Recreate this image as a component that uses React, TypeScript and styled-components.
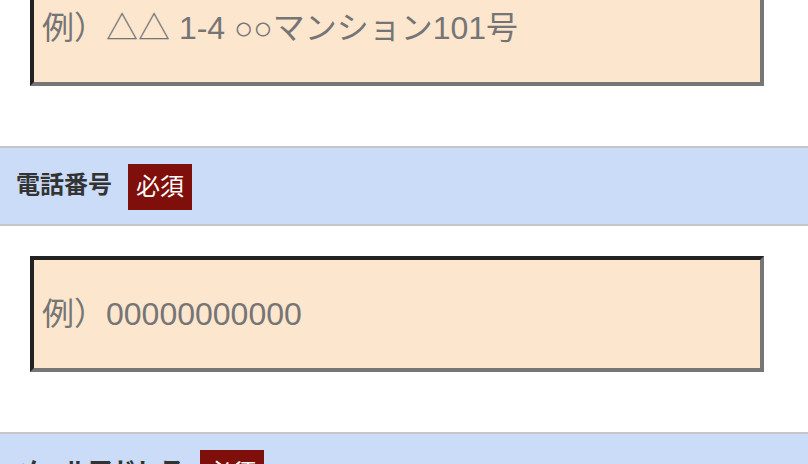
import styled, { createGlobalStyle } from "styled-components";

const GlobalStyle = createGlobalStyle`
  html, body {
    margin: 0;
    padding: 0;
    background: #fff;
    overflow: hidden;
  }
  body {
    font-family: "Liberation Sans", "Noto Sans CJK JP", sans-serif;
  }
  * {
    box-sizing: border-box;
  }
`;

interface FieldProps {
  label: string;
  placeholder: string;
  type?: string;
}

const fields: FieldProps[] = [
  { label: "電話番号", placeholder: "例）00000000000", type: "tel" },
  { label: "メールアドレス", placeholder: "例）example@example.com", type: "email" },
];

export default function App() {
  return (
    <>
      <GlobalStyle />
      <Page>
        {/* 前の項目（住所）の入力欄 */}
        <InputArea>
          <Input type="text" placeholder="例）△△ 1-4 ○○マンション101号" />
        </InputArea>
        {fields.map((field) => (
          <section key={field.label}>
            <Header>
              <Label>{field.label}</Label>
              <Required>必須</Required>
            </Header>
            <InputArea>
              <Input type={field.type} placeholder={field.placeholder} />
            </InputArea>
          </section>
        ))}
      </Page>
    </>
  );
}

/**
 * スタイル
 */
const Page = styled.div`
  margin-top: -60px;
  width: 808px;
`;

const InputArea = styled.div`
  padding: 30px 44px 60px 30px;
`;

const Input = styled.input`
  display: block;
  width: 100%;
  height: 116px;
  padding: 0 8px;
  font-family: "Liberation Sans", "Noto Sans CJK JP", sans-serif;
  font-size: 32px;
  color: #333;
  background-color: #fde6ce;
  border-style: solid;
  border-width: 4px;
  border-color: #222 #767676 #767676 #222;
  border-radius: 0;
  outline: none;
  &::placeholder {
    color: #757575;
  }
`;

const Header = styled.div`
  display: flex;
  align-items: flex-start;
  padding: 16px 16px 14px;
  background-color: #cadcf8;
  border-top: 2px solid #c6c6c6;
  border-bottom: 2px solid #c6c6c6;
`;

const Label = styled.span`
  padding-top: 7px;
  font-family: "Noto Sans CJK JP", sans-serif;
  font-size: 24px;
  font-weight: 700;
  color: #333;
  line-height: 24px;
`;

const Required = styled.span`
  margin-left: 16px;
  padding: 3px 8px 7px;
  font-family: "Noto Sans CJK JP", sans-serif;
  font-size: 24px;
  line-height: 36px;
  color: #fff;
  background-color: #7f0f0a;
`;
